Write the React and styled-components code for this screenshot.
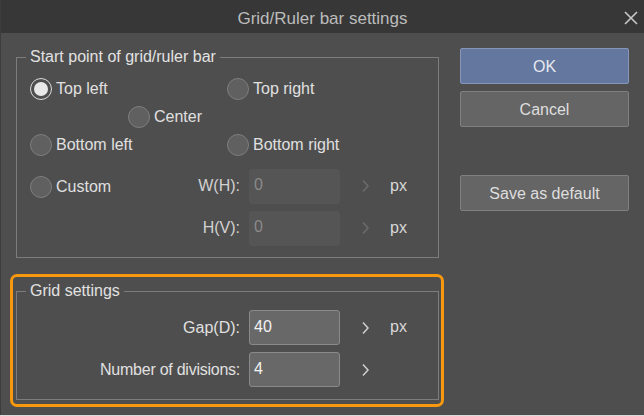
import React from "react";
import styled, { createGlobalStyle } from "styled-components";

const Global = createGlobalStyle`
  html, body { margin: 0; padding: 0; background: #dcdcdc; }
  body { font-family: "Liberation Sans", Arial, sans-serif; }
  #root { width: 644px; height: 416px; }
  * { box-sizing: border-box; }
`;

const Window = styled.div`
  width: 644px;
  height: 415px;
  background: #4e4e4e;
  border-left: 1px solid #3d3d3d;
  display: flex;
  flex-direction: column;
  color: #e0e0e0;
  font-size: 16px;
`;

const TitleBar = styled.div`
  height: 33px;
  background: #373737;
  display: grid;
  grid-template-columns: 1fr auto 1fr;
  align-items: center;
`;

const Title = styled.div`
  grid-column: 2;
  font-size: 17px;
  color: #bcbcbc;
  padding-top: 4px;
`;

const Close = styled.button`
  grid-column: 3;
  justify-self: end;
  margin-right: 6px;
  margin-top: 2px;
  background: none;
  border: none;
  padding: 0;
  width: 15px;
  height: 15px;
  display: flex;
  align-items: center;
  justify-content: center;
  cursor: pointer;
`;

const Main = styled.div`
  display: flex;
  gap: 21px;
  padding: 15px 15px 0 15px;
`;

const LeftCol = styled.div`
  width: 423px;
  display: flex;
  flex-direction: column;
  gap: 24px;
`;

const Group = styled.fieldset`
  margin: 0;
  padding: 0;
  min-width: 0;
  border: 1px solid #7c7c7c;
`;

const Legend = styled.legend`
  margin-left: 9px;
  padding: 0 4px;
  font-size: 16px;
  line-height: 18px;
  color: #e2e2e2;
`;

const Grid = styled.div`
  display: grid;
  grid-template-columns: 98px 99px 13px 9px 91px 50px 1fr;
  grid-template-rows: ${(p) => p.$rows};
  row-gap: ${(p) => p.$rowGap || 0}px;
  align-items: center;
  padding: ${(p) => p.$pad};
  padding-left: 13px;
`;

const RadioItem = styled.label`
  grid-column: ${(p) => p.$col};
  grid-row: ${(p) => p.$row};
  display: flex;
  align-items: center;
  gap: 4px;
  white-space: nowrap;
  cursor: default;
  padding-top: 1px;
`;

const Circle = styled.span`
  width: 22px;
  height: 22px;
  border-radius: 50%;
  flex: none;
  border: 1px solid #7e7e7e;
  background: #606060;
  position: relative;
  ${(p) =>
    p.$on &&
    `
    border: 1.5px solid #d9d9d9;
    background: #4e4e4e;
    &::after {
      content: "";
      position: absolute;
      inset: 3px;
      border-radius: 50%;
      background: #e8e8e8;
    }
  `}
`;

const FieldLabel = styled.span`
  grid-column: ${(p) => p.$col};
  grid-row: ${(p) => p.$row};
  text-align: right;
  padding-right: 9px;
  white-space: nowrap;
  letter-spacing: ${(p) => (p.$tight ? "-0.25px" : "0")};
  color: ${(p) => (p.$dim ? "#d2d2d2" : "#e0e0e0")};
`;

const Input = styled.div`
  grid-column: 5;
  grid-row: ${(p) => p.$row};
  height: 35px;
  border-radius: 3px;
  display: flex;
  align-items: center;
  padding-left: 4px;
  padding-bottom: 2px;
  background: ${(p) => (p.$disabled ? "#555555" : "#686868")};
  border: 1px solid ${(p) => (p.$disabled ? "#555555" : "#8a8a8a")};
  color: ${(p) => (p.$disabled ? "#8a8a8a" : "#f2f2f2")};
`;

const Spin = styled.span`
  grid-column: 6;
  grid-row: ${(p) => p.$row};
  display: flex;
  justify-content: center;
  align-items: center;
`;

const Unit = styled.span`
  grid-column: 7;
  grid-row: ${(p) => p.$row};
  color: #d8d8d8;
  padding-bottom: 1px;
`;

const Highlight = styled.div`
  position: relative;
  &::after {
    content: "";
    position: absolute;
    top: -8px;
    left: -6px;
    right: -5px;
    bottom: -7px;
    border: 3px solid #f7980e;
    border-radius: 7px;
    pointer-events: none;
  }
`;

const RightCol = styled.div`
  width: 169px;
  display: flex;
  flex-direction: column;
`;

const Button = styled.button`
  height: 36px;
  margin-top: ${(p) => p.$gap || 0}px;
  font-family: inherit;
  font-size: 16px;
  color: ${(p) => (p.$primary ? "#e6e9f0" : "#dedede")};
  background: ${(p) => (p.$primary ? "#64779e" : "#656565")};
  border: 1px solid ${(p) => (p.$primary ? "#8796b8" : "#808080")};
  border-radius: 2px;
  padding: 2px 0 0;
`;

const Chevron = ({ dim }) => (
  <svg width="9" height="14" viewBox="0 0 9 14">
    <polyline
      points="2,1.5 7,7 2,12.5"
      fill="none"
      stroke={dim ? "#6c6c6c" : "#cfcfcf"}
      strokeWidth="1.5"
    />
  </svg>
);

const Radio = ({ col, row, on, children }) => (
  <RadioItem $col={col} $row={row}>
    <Circle $on={on} />
    {children}
  </RadioItem>
);

export default function App() {
  return (
    <>
      <Global />
      <Window>
        <TitleBar>
          <Title>Grid/Ruler bar settings</Title>
          <Close aria-label="Close">
            <svg width="14" height="14" viewBox="0 0 14 14">
              <path d="M1 1 L13 13 M13 1 L1 13" stroke="#c9c9c9" strokeWidth="1.6" />
            </svg>
          </Close>
        </TitleBar>
        <Main>
          <LeftCol>
            <Group>
              <Legend>Start point of grid/ruler bar</Legend>
              <Grid $rows="28px 28px 28px 56px 28px" $pad="8px 0 15px">
                <Radio col="1" row="1" on>Top left</Radio>
                <Radio col="3 / -1" row="1">Top right</Radio>
                <Radio col="2" row="2">Center</Radio>
                <Radio col="1" row="3">Bottom left</Radio>
                <Radio col="3 / -1" row="3">Bottom right</Radio>
                <Radio col="1" row="4">Custom</Radio>
                <FieldLabel $col="2 / 5" $row="4" $dim>W(H):</FieldLabel>
                <Input $row="4" $disabled>0</Input>
                <Spin $row="4"><Chevron dim /></Spin>
                <Unit $row="4">px</Unit>
                <FieldLabel $col="2 / 5" $row="5" $dim>H(V):</FieldLabel>
                <Input $row="5" $disabled>0</Input>
                <Spin $row="5"><Chevron dim /></Spin>
                <Unit $row="5">px</Unit>
              </Grid>
            </Group>
            <Highlight>
              <Group>
                <Legend>Grid settings</Legend>
                <Grid $rows="35px 35px" $rowGap={7} $pad="10px 0 12px">
                  <FieldLabel $col="1 / 5" $row="1">Gap(D):</FieldLabel>
                  <Input $row="1">40</Input>
                  <Spin $row="1"><Chevron /></Spin>
                  <Unit $row="1">px</Unit>
                  <FieldLabel $col="1 / 5" $row="2" $tight>Number of divisions:</FieldLabel>
                  <Input $row="2">4</Input>
                  <Spin $row="2"><Chevron /></Spin>
                </Grid>
              </Group>
            </Highlight>
          </LeftCol>
          <RightCol>
            <Button $primary>OK</Button>
            <Button $gap={7}>Cancel</Button>
            <Button $gap={48}>Save as default</Button>
          </RightCol>
        </Main>
      </Window>
    </>
  );
}
